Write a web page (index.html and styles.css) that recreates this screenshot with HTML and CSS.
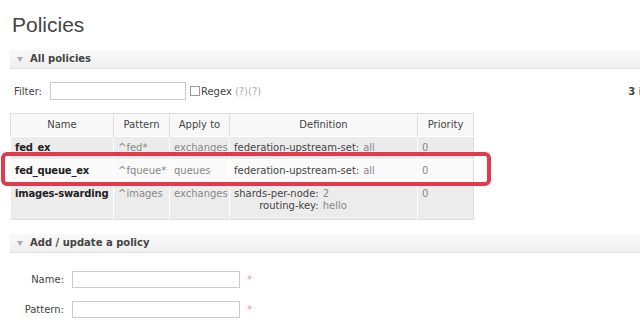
FILE: index.html
```html
<!doctype html>
<html lang="en">
<head>
<meta charset="UTF-8" />
<title>Policies</title>
<link rel="stylesheet" href="styles.css">
</head>
<body>

<div class="page">
	<h1>Policies</h1>

	<div class="section">
		<div class="section-head"><i class="arrow"></i>All policies</div>

		<div class="filter">
			<label>Filter:</label>
			<input type="text" class="filter-input" />
			<input type="checkbox" class="check" />
			<span>Regex</span>
			<span class="help">(?)(?)</span>
			<span class="count">3 items</span>
		</div>

		<div class="table-wrap">
			<table class="policies">
				<thead>
					<tr>
						<th class="c-name">Name</th>
						<th class="c-pattern">Pattern</th>
						<th class="c-apply">Apply to</th>
						<th class="c-def">Definition</th>
						<th class="c-prio">Priority</th>
					</tr>
				</thead>
				<tbody>
					<tr class="alt">
						<td class="name">fed_ex</td>
						<td class="muted">^fed*</td>
						<td class="muted">exchanges</td>
						<td>
							<div class="def">
								<span class="k">federation-upstream-set:</span><span class="v">all</span>
							</div>
						</td>
						<td class="muted">0</td>
					</tr>
					<tr>
						<td class="name">fed_queue_ex</td>
						<td class="muted">^fqueue*</td>
						<td class="muted">queues</td>
						<td>
							<div class="def">
								<span class="k">federation-upstream-set:</span><span class="v">all</span>
							</div>
						</td>
						<td class="muted">0</td>
					</tr>
					<tr class="alt tall">
						<td class="name">images-swarding</td>
						<td class="muted">^images</td>
						<td class="muted">exchanges</td>
						<td>
							<div class="def">
								<span class="k">shards-per-node:</span><span class="v">2</span>
								<span class="k">routing-key:</span><span class="v">hello</span>
							</div>
						</td>
						<td class="muted">0</td>
					</tr>
				</tbody>
			</table>
			<!-- red marker drawn over the second row -->
			<div class="highlight"></div>
		</div>
	</div>

	<div class="section section-add">
		<div class="section-head"><i class="arrow"></i>Add / update a policy</div>

		<div class="form">
			<div class="form-row">
				<label>Name:</label>
				<input type="text" class="field" />
				<span class="req">*</span>
			</div>
			<div class="form-row">
				<label>Pattern:</label>
				<input type="text" class="field" />
				<span class="req">*</span>
			</div>
		</div>
	</div>
</div>

</body>
</html>
```

FILE: styles.css
```css
html,body{margin:0;padding:0;}
html,body{overflow:hidden;background:#fff;}

body{
	font-family: "DejaVu Sans", Verdana, sans-serif;
	font-size: 10px;
	color: #444;
}

.page{
	width: 660px;
	padding-left: 10px;
}

h1{
	margin: 0 0 13px 0;
	padding: 13px 0 0 2px;
	font-family: "Liberation Sans", Arial, sans-serif;
	font-size: 21px;
	line-height: 24px;
	font-weight: normal;
	color: #444;
}

/* section bars */
.section-head{
	height: 18px;
	line-height: 18px;
	padding-left: 7px;
	background: linear-gradient(#f9f9f9, #efefef);
	border-bottom: 1px solid #ddd;
	font-weight: bold;
	color: #444;
	display: flex;
	align-items: center;
}

.arrow{
	display: inline-block;
	width: 0;
	height: 0;
	border-left: 3.5px solid transparent;
	border-right: 3.5px solid transparent;
	border-top: 5px solid #aaa;
	margin-right: 7px;
}

/* filter line */
.filter{
	display: flex;
	align-items: center;
	margin-top: 13px;
	padding-left: 4px;
	height: 18px;
}

.filter label{margin-right: 8px;}

.filter-input{
	box-sizing: border-box;
	width: 136px;
	height: 18px;
	margin: 0 4px 0 0;
	border: 1px solid #ccc;
	padding: 0;
}

.check{
	appearance: none;
	-webkit-appearance: none;
	box-sizing: border-box;
	width: 10px;
	height: 10px;
	margin: 0 1px 0 0;
	border: 1px solid #999;
	background: #fff;
}

.help{
	color: #aaa;
	margin-left: 3px;
}

.count{
	margin-left: auto;
	font-weight: bold;
}

/* table */
.table-wrap{
	position: relative;
	margin-top: 13px;
}

.policies{
	border-collapse: collapse;
	table-layout: fixed;
	width: 463px;
	border: 1px solid #ddd;
	line-height: 12px;
	white-space: nowrap;
}

.policies th,
.policies td{
	padding: 5px 4px 5px 4px;
	text-align: left;
	vertical-align: top;
	box-sizing: border-box;
	overflow: visible;
}

.policies th{
	font-weight: normal;
	text-align: center;
	background: #f8f8f8;
	border-left: 1px solid #ddd;
	height: 22px;
}

.policies td{
	background: #fafafa;
	border-left: 1px solid #fff;
	border-top: 1px solid #fff;
	height: 23px;
}

.policies tr.alt td{background: #ececec;}
.policies tr.tall td{height: 37px;}

.c-name{width: 103px;}
.c-pattern{width: 56px;}
.c-apply{width: 60px;}
.c-def{width: 188px;}
.c-prio{width: 56px;}

.policies td.name{
	font-weight: bold;
	color: #222;
	letter-spacing: -0.2px;
}

.policies td.muted{color: #888;}

.def{
	display: inline-grid;
	grid-template-columns: auto auto;
	column-gap: 4px;
}
.def .k{text-align: right; color: #444;}
.def .v{color: #888;}

.highlight{
	position: absolute;
	left: -9px;
	top: 39px;
	width: 490px;
	height: 34px;
	box-sizing: border-box;
	border: 4px solid #e2394d;
	border-radius: 6px;
}

/* add form */
.section-add{margin-top: 14px;}

.form{
	padding-top: 18px;
	display: flex;
	flex-direction: column;
	gap: 13px;
}

.form-row{
	display: flex;
	align-items: center;
}

.form-row label{
	width: 54px;
	text-align: right;
	margin-right: 8px;
}

.field{
	box-sizing: border-box;
	width: 168px;
	height: 17px;
	margin: 0;
	border: 1px solid #ccc;
	padding: 0;
}

.req{
	margin-left: 7px;
	color: #e59aa2;
}
```
